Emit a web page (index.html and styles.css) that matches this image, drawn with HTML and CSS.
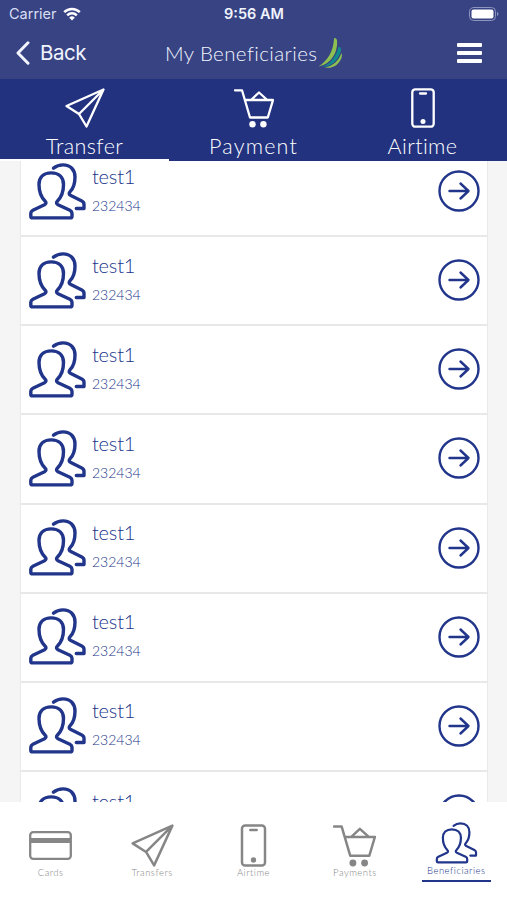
FILE: index.html
```html
<!DOCTYPE html>
<html lang="en">
<head>
  <meta charset="UTF-8">
  <meta name="viewport" content="width=device-width, initial-scale=1.0">
  <title>My Beneficiaries</title>
  <link rel="stylesheet" href="styles.css">
</head>
<body>
  <!-- shared icons -->
  <svg class="sprite" width="0" height="0">
    <symbol id="plane" viewBox="0 0 40 40">
      <path d="M38.5 1.5L1.5 18 14 26l7.5 12.5zM38.5 1.5L14 26"/>
    </symbol>
    <symbol id="cart" viewBox="0 0 40 40">
      <path d="M1 2.3h7l8 27.2h17.8L39 12H11M17 12l8-7.5 8.3 7.5"/>
      <circle class="solid" cx="18.5" cy="36.3" r="3.2"/>
      <circle class="solid" cx="29.4" cy="36.3" r="3.2"/>
    </symbol>
    <symbol id="phone" viewBox="0 0 24 40">
      <rect x="1.3" y="1.3" width="21.4" height="37.4" rx="3"/>
      <path d="M9 5.5h6"/>
      <circle class="solid" cx="12" cy="33.5" r="2.5"/>
    </symbol>
    <symbol id="card" viewBox="0 0 43 29">
      <rect x="1.2" y="1.2" width="40.6" height="26.6" rx="3"/>
      <path class="stripe" d="M1 9.5h41"/>
    </symbol>
    <symbol id="people" viewBox="0 0 57 57">
      <path d="M22.2 9.9C14.5 9.9 10 14.5 10 21.5c0 7 2 12.500 6 16.500 1.500 1.500 1.300 2.700-.5 3.700L3.900 47.200C2.400 48 1.800 48.800 1.800 50.200v3q0 1.700 1.700 1.700h37.800q1.700 0 1.700-1.700v-3c0-1.400-.6-2.200-2.100-3L29 41.700c-1.800-1-2-2.200-.5-3.700 4-4 6-9.500 6-16.500 0-7-4.600-11.600-12.300-11.600z"/>
      <path d="M24.5 5.2c3-2.400 6.300-3.300 9.500-3.300 7.500 0 12 5 12 12 0 6-.9 10.300-4.700 14.500-1.700 1.900-1.500 3.100.5 4.100l11 5.500c1.700.9 2.200 1.600 2.200 3.200v4.300h-7.700"/>
    </symbol>
    <symbol id="go" viewBox="0 0 42 42">
      <circle cx="21" cy="21" r="19.5"/>
      <path d="M11.5 21H30M22.5 13.5l8 7.5-8 7.5"/>
    </symbol>
  </svg>

  <header class="header">
    <div class="status">
      <div class="carrier">
        <span>Carrier</span>
        <svg class="wifi" viewBox="0 0 18 14">
          <path d="M1.2 5.2a11 11 0 0 1 15.6 0M4.2 8.3a6.8 6.8 0 0 1 9.6 0"/>
          <path class="solid" d="M9 13.5L6.2 10.7a4 4 0 0 1 5.6 0z"/>
        </svg>
      </div>
      <span class="time">9:56 AM</span>
      <svg class="battery" viewBox="0 0 30 14">
        <rect class="shell" x=".5" y=".5" width="26" height="13" rx="4"/>
        <rect class="charge" x="2.5" y="2.5" width="22" height="9" rx="2"/>
        <path class="cap" d="M28 4.8q3 2.2 0 4.4z"/>
      </svg>
    </div>
    <div class="title-bar">
      <a class="back" href="#">
        <svg viewBox="0 0 14 24"><path d="M12 1.8L2 12l10 10.2"/></svg>
        <span>Back</span>
      </a>
      <div class="title">
        <h1>My Beneficiaries</h1>
        <svg class="logo" viewBox="0 0 24 32">
          <path fill="#8cc152" d="M15.5 1.5q1.5-1.5 3 1.5C19.5 14 14 26.5 0 29.5 9 24 15 14 15.5 1.5z"/>
          <path fill="#0f8b8d" d="M20 9.5q3 1 2.5 4C20 23 13 29.5 4 30 13 26 18 19 20 9.5z"/>
          <path fill="#8cc152" d="M23 16q1 2 0 5C20 28 14 32 6.5 30.5 14.5 29 20 24 23 16z"/>
        </svg>
      </div>
      <button class="menu" aria-label="Menu"><i></i><i></i><i></i></button>
    </div>
  </header>

  <nav class="tabs">
    <a class="tab active" href="#"><svg class="icon"><use href="#plane"/></svg><span>Transfer</span></a>
    <a class="tab" href="#"><svg class="icon"><use href="#cart"/></svg><span class="payment">Payment</span></a>
    <a class="tab" href="#"><svg class="icon"><use href="#phone"/></svg><span>Airtime</span></a>
  </nav>

  <main class="content">
    <ul class="list">
      <li class="row">
        <svg class="people"><use href="#people"/></svg>
        <div class="info"><p class="name">test1</p><p class="number">232434</p></div>
        <svg class="go"><use href="#go"/></svg>
      </li>
      <li class="row">
        <svg class="people"><use href="#people"/></svg>
        <div class="info"><p class="name">test1</p><p class="number">232434</p></div>
        <svg class="go"><use href="#go"/></svg>
      </li>
      <li class="row">
        <svg class="people"><use href="#people"/></svg>
        <div class="info"><p class="name">test1</p><p class="number">232434</p></div>
        <svg class="go"><use href="#go"/></svg>
      </li>
      <li class="row">
        <svg class="people"><use href="#people"/></svg>
        <div class="info"><p class="name">test1</p><p class="number">232434</p></div>
        <svg class="go"><use href="#go"/></svg>
      </li>
      <li class="row">
        <svg class="people"><use href="#people"/></svg>
        <div class="info"><p class="name">test1</p><p class="number">232434</p></div>
        <svg class="go"><use href="#go"/></svg>
      </li>
      <li class="row">
        <svg class="people"><use href="#people"/></svg>
        <div class="info"><p class="name">test1</p><p class="number">232434</p></div>
        <svg class="go"><use href="#go"/></svg>
      </li>
      <li class="row">
        <svg class="people"><use href="#people"/></svg>
        <div class="info"><p class="name">test1</p><p class="number">232434</p></div>
        <svg class="go"><use href="#go"/></svg>
      </li>
      <li class="row">
        <svg class="people"><use href="#people"/></svg>
        <div class="info"><p class="name">test1</p></div>
        <svg class="go"><use href="#go"/></svg>
      </li>
    </ul>
  </main>

  <nav class="bottom-nav">
    <a class="nav-item" href="#"><svg class="icon"><use href="#card"/></svg><span>Cards</span></a>
    <a class="nav-item" href="#"><svg class="icon"><use href="#plane"/></svg><span>Transfers</span></a>
    <a class="nav-item" href="#"><svg class="icon"><use href="#phone"/></svg><span>Airtime</span></a>
    <a class="nav-item" href="#"><svg class="icon"><use href="#cart"/></svg><span>Payments</span></a>
    <a class="nav-item active" href="#"><svg class="icon"><use href="#people"/></svg><span>Beneficiaries</span></a>
  </nav>
</body>
</html>
```
FILE: styles.css
```css
:root {
  --header: #374382;
  --navy: #22327f;
  --blue: #21358b;
  --grey: #868686;
}
* {
  box-sizing: border-box;
}
body {
  margin: 0;
  height: 900px;
  display: flex;
  flex-direction: column;
  overflow: hidden;
  background: white;
  font-family: "Century Gothic", Lato, sans-serif;
  font-weight: 300;
  font-variant-ligatures: none;
}
a {
  color: inherit;
  text-decoration: none;
}
p, h1 {
  margin: 0;
  font-weight: 300;
}
svg {
  display: block;
  flex: none;
  fill: none;
  stroke: currentColor;
  stroke-width: 2;
  stroke-linecap: round;
  stroke-linejoin: round;
}
.sprite {
  position: absolute;
}
.solid {
  fill: currentColor;
  stroke: none;
}
.stripe {
  stroke-width: 5;
  stroke-linecap: butt;
}

/* header */
.header {
  height: 79px;
  flex: none;
  background: var(--header);
  color: #f1f3ff;
}
.status {
  height: 27px;
  padding: 0 8px 0 9px;
  display: grid;
  grid-template-columns: 1fr auto 1fr;
  align-items: center;
  font: 14.5px/27px Inter, sans-serif;
}
.carrier {
  display: flex;
  gap: 6px;
  align-items: center;
  color: #d9def5;
}
.wifi {
  width: 18px;
  height: 14px;
  color: white;
  stroke-width: 2.5;
  stroke-linecap: butt;
}
.time {
  font-weight: 600;
}
.battery {
  width: 30px;
  height: 14px;
  justify-self: end;
  stroke: none;
}
.battery .shell {
  stroke: #8d95bd;
  stroke-width: 1;
}
.battery .charge {
  fill: white;
}
.battery .cap {
  fill: #8d95bd;
}
.title-bar {
  height: 52px;
  padding: 0 25px 0 16px;
  display: grid;
  grid-template-columns: 1fr auto 1fr;
  align-items: center;
}
.back {
  display: flex;
  align-items: center;
  gap: 10px;
  font: 20.5px/24px Inter, sans-serif;
  letter-spacing: -0.5px;
}
.back svg {
  width: 14px;
  height: 24px;
  stroke-width: 3;
}
.title {
  display: flex;
  align-items: center;
  margin-left: 10px;
}
.title h1 {
  width: 153px;
  font-size: 20.5px;
  line-height: 24px;
  letter-spacing: 0.4px;
  white-space: nowrap;
}
.logo {
  width: 25px;
  height: 32px;
  stroke: none;
}
.menu {
  display: grid;
  gap: 4px;
  justify-self: end;
  padding: 0;
  border: 0;
  background: none;
}
.menu i {
  width: 25px;
  height: 4px;
  border-radius: 1px;
  background: white;
}

/* top tabs */
.tabs {
  height: 82px;
  flex: none;
  display: grid;
  grid-template-columns: repeat(3, 1fr);
  background: var(--navy);
  color: white;
}
.tab {
  display: flex;
  flex-direction: column;
  align-items: center;
  padding-top: 9px;
  border-bottom: 2px solid transparent;
}
.tab.active {
  border-color: white;
}
.tab .icon {
  width: 40px;
  height: 40px;
  stroke-width: 2.3;
}
.tab span {
  margin-top: 6px;
  font-size: 21.5px;
  line-height: 25px;
  letter-spacing: 0.4px;
}
.tab .payment {
  letter-spacing: 1.2px;
}

/* list */
.content {
  flex: 1;
  min-height: 0;
  overflow: hidden;
  padding: 0 19px 0 20px;
  background: #f5f5f5;
}
.list {
  list-style: none;
  margin: -13px 0 0;
  padding: 0;
  background: white;
  border: solid #e9e9e9;
  border-width: 0 1px;
}
.row {
  height: 89.15px;
  padding: 0 7px 1px 8px;
  display: flex;
  align-items: center;
  border-bottom: 2px solid #e8e8e8;
  color: var(--blue);
}
.row:last-child {
  align-items: flex-start;
  padding-top: 15px;
}
.row:last-child .go {
  margin-top: 7px;
}
.people {
  width: 57px;
  height: 57px;
  stroke-width: 3.4;
}
.info {
  flex: 1;
  padding-left: 6px;
}
.name {
  font-size: 20px;
  line-height: 28px;
  letter-spacing: -0.2px;
}
.number {
  font-size: 14px;
  line-height: 31px;
}
.go {
  width: 42px;
  height: 42px;
  stroke-width: 2.4;
}

/* bottom nav */
.bottom-nav {
  height: 98px;
  flex: none;
  padding-top: 20px;
  display: grid;
  grid-template-columns: repeat(5, 1fr);
  justify-items: center;
  align-items: start;
  color: var(--grey);
}
.nav-item {
  display: flex;
  flex-direction: column;
  align-items: center;
  padding-top: 2px;
}
.nav-item .icon {
  width: 43px;
  height: 43px;
  stroke-width: 2.3;
}
.nav-item span {
  font-size: 9.5px;
  line-height: 12px;
  letter-spacing: 0.5px;
}
.nav-item.active {
  width: 69px;
  padding-top: 0;
  border-bottom: 2px solid var(--blue);
  color: var(--blue);
}
.nav-item.active .icon {
  height: 42px;
  stroke-width: 3;
}
.nav-item.active span {
  padding-bottom: 3px;
  line-height: 13px;
}
```
